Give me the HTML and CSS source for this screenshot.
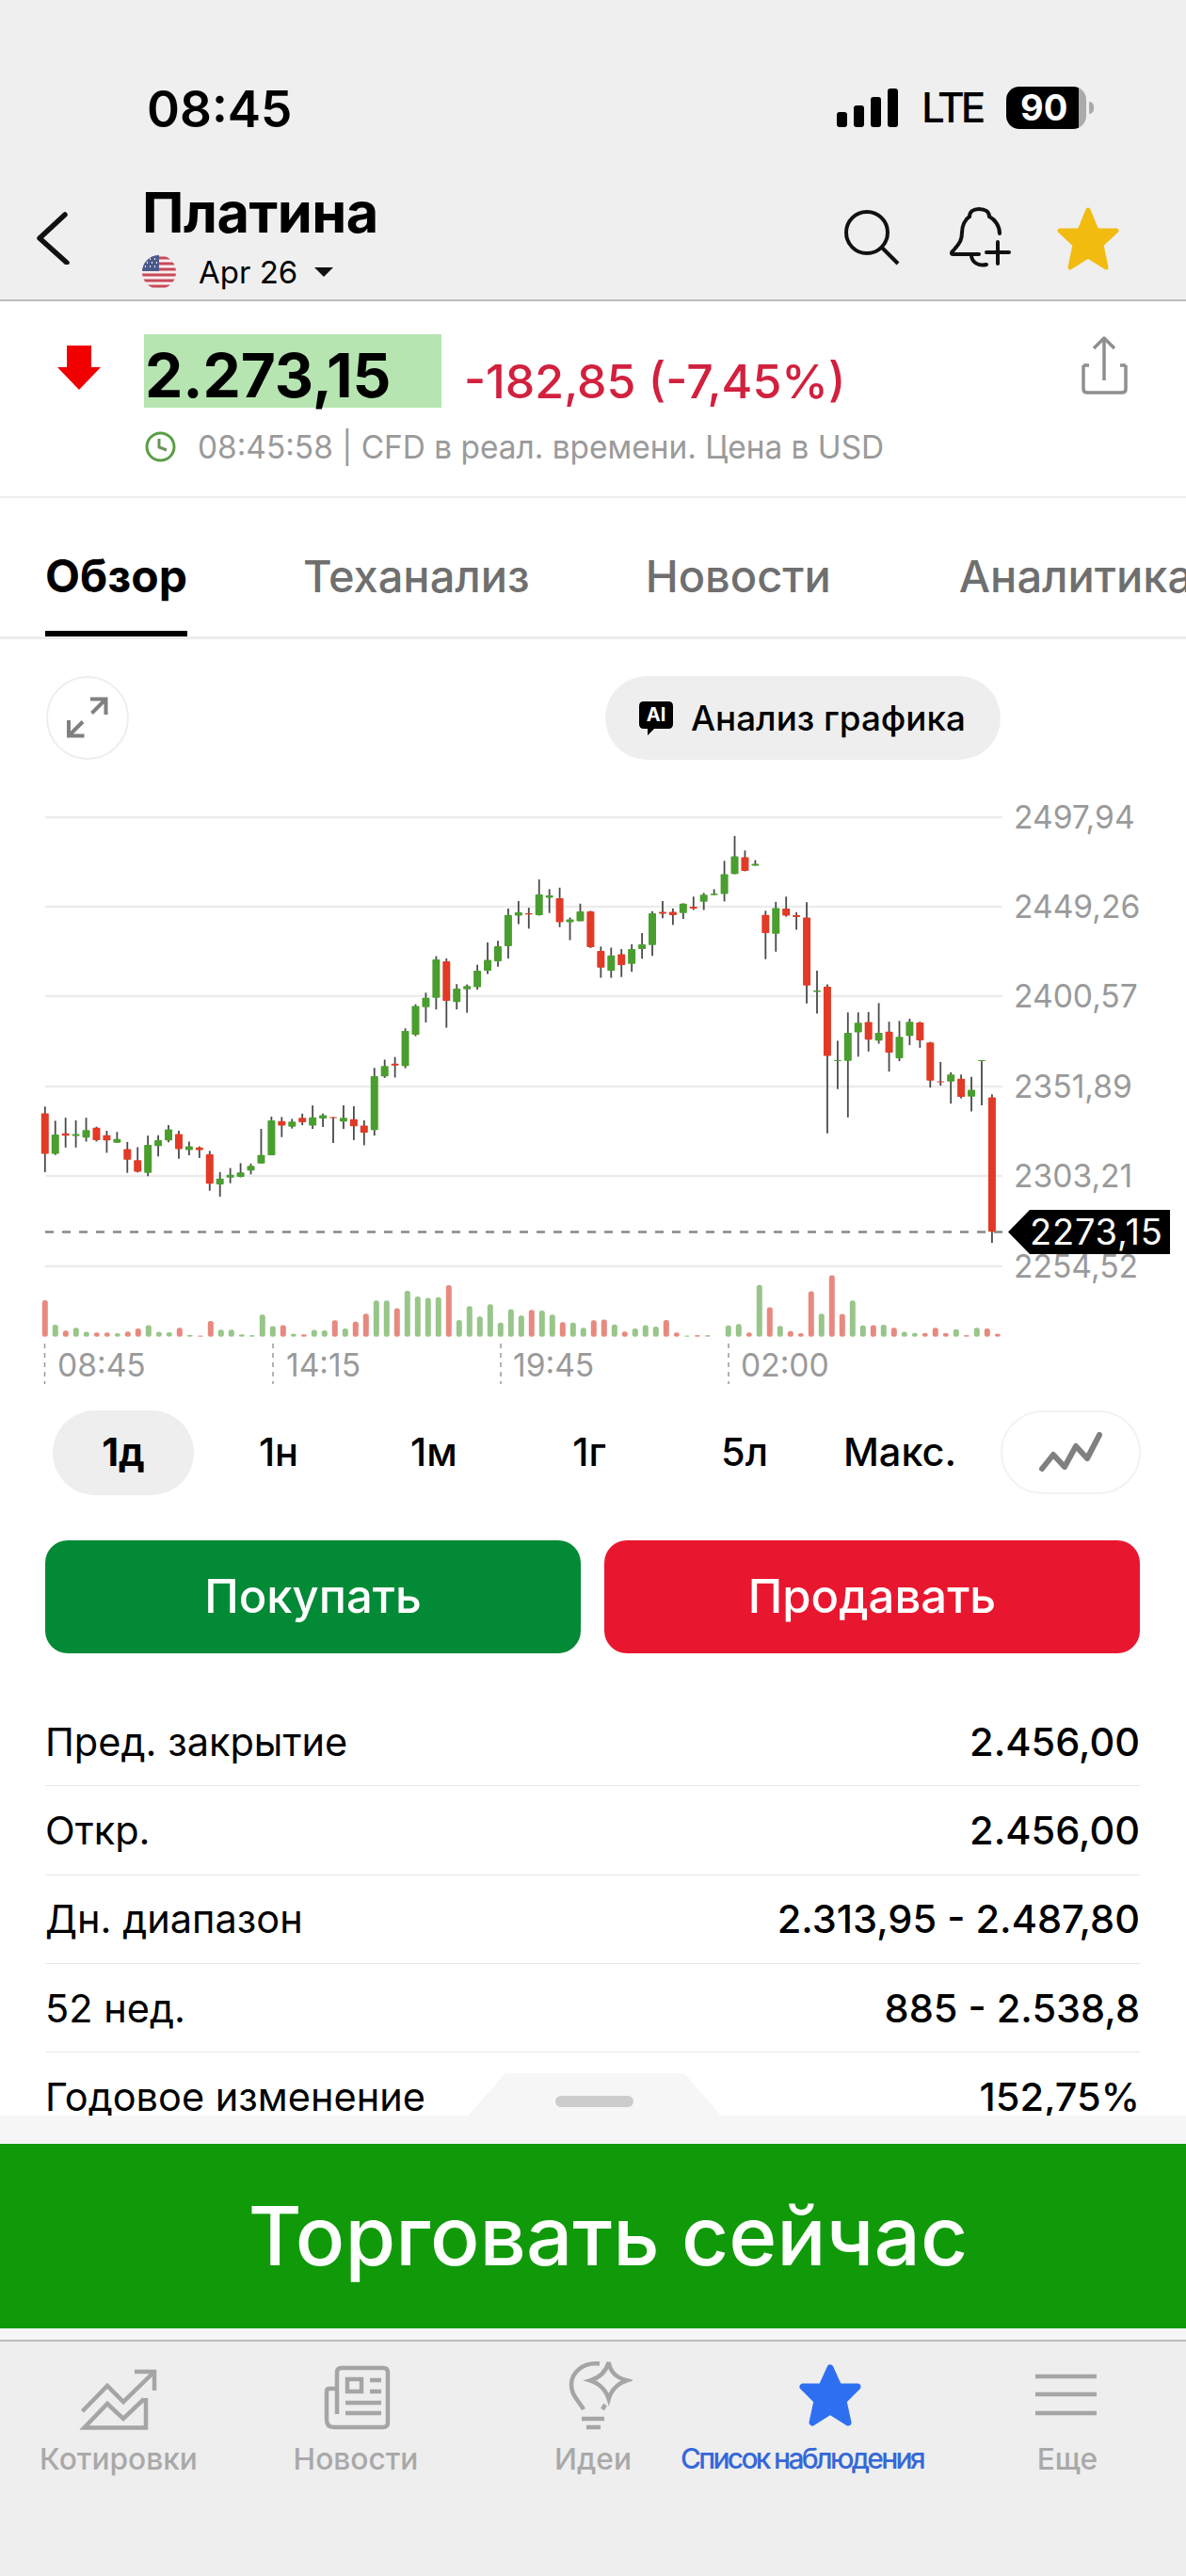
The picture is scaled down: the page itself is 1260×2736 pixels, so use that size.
FILE: index.html
```html
<html lang="ru">

<head>
    <meta charset="utf-8" />
    <title>Платина</title>
    <link rel="stylesheet" href="styles.css">
</head>

<body>
    <div class="content">
        <header class="top">
            <div class="status">
                <div class="status-time">08:45</div>
                <div class="signal"><i class="s1"></i><i class="s2"></i><i class="s3"></i><i class="s4"></i></div>
                <div class="lte">LTE</div>
                <div class="battery">90</div>
                <div class="battery-nub"></div>
            </div>
            <div class="nav">
                <svg class="back" viewBox="0 0 36 56">
                    <path d="M30 3 L3 28 L32 54" />
                </svg>
                <div class="nav-title">
                    <div class="title">Платина</div>
                    <div class="contract">
                        <svg class="flag" viewBox="0 0 36 36">
                            <defs>
                                <clipPath id="flag-clip"><circle cx="18" cy="18" r="18" /></clipPath>
                            </defs>
                            <g clip-path="url(#flag-clip)">
                                <rect width="36" height="36" fill="#f7eeee" />
                                <path d="M0 3H36M0 9H36M0 15H36M0 21H36M0 27H36M0 33H36" stroke="#c9495a" stroke-width="2.8" />
                                <rect width="18" height="17" fill="#4b5a8c" />
                                <path d="M3 4h1M8 4h1M13 4h1M5 8h1M10 8h1M15 8h1M3 12h1M8 12h1M13 12h1" stroke="#eee" stroke-width="2" />
                            </g>
                        </svg>
                        <span class="contract-name">Apr 26</span>
                        <span class="caret"></span>
                    </div>
                </div>
                <svg class="icon-search" viewBox="0 0 60 60">
                    <circle cx="24" cy="25" r="22" />
                    <path d="M40 41 L57 58" />
                </svg>
                <svg class="icon-bell" viewBox="0 0 66 66">
                    <path d="M53 28 C53 20 48 13 42 10 C42 5 38 2 31 2 C25 2 21 5 21 10 C16 13 13 20 13 27 C13 37 8 41 3 47 C1 49 2 50 4 50 L31 50" />
                    <path d="M23 52 C24 59 31 63 39 61" />
                    <path d="M39 48 H63 M51 37 V60" />
                </svg>
                <svg class="icon-star" viewBox="0 0 66 67">
                    <polygon points="33,3 42,25 63,25 47,40 52,64 33,52 14,64 19,40 3,25 24,25" />
                </svg>
            </div>
        </header>

        <section class="quote">
            <div class="quote-main">
                <svg class="down-arrow" viewBox="0 0 46 47">
                    <polygon points="10,0 36,0 36,23 46,23 23,47 0,23 10,23" />
                </svg>
                <div class="price">2.273,15</div>
                <div class="change">-182,85 (-7,45%)</div>
                <svg class="share" viewBox="0 0 49 64">
                    <path d="M24 3 V48 M13 14 L24 3 L35 14" />
                    <path d="M2 32 H8 M41 32 H47 M2 32 V57 Q2 61 6 61 H43 Q47 61 47 57 V32" />
                </svg>
            </div>
            <div class="quote-sub">
                <svg class="clock" viewBox="0 0 33 33">
                    <circle cx="16.5" cy="16.5" r="14.5" />
                    <path d="M15 8 V17 L23 20" />
                </svg>
                <span>08:45:58 | CFD в реал. времени. Цена в USD</span>
            </div>
        </section>

        <nav class="tabs">
            <div class="tab tab-active">Обзор</div>
            <div class="tab">Теханализ</div>
            <div class="tab">Новости</div>
            <div class="tab tab-last">Аналитика</div>
        </nav>

        <div class="chart-tools">
            <div class="round-btn">
                <svg viewBox="0 0 88 88">
                    <path d="M47 24.5 H63.5 V41 M63.5 24.5 L48.5 39.5" />
                    <path d="M24 47 V63.5 H40.5 M24 63.5 L39 48.5" />
                </svg>
            </div>
            <div class="ai-btn">
                <svg class="ai-icon" viewBox="0 0 36 36">
                    <path d="M5 0 H31 Q36 0 36 5 V24 Q36 29 31 29 H16 L9 36 V29 H5 Q0 29 0 24 V5 Q0 0 5 0 Z" />
                    <text x="18" y="21" text-anchor="middle">AI</text>
                </svg>
                <span>Анализ графика</span>
            </div>
        </div>

        <!-- chart coordinates are page coordinates, candles and volume come from chart.js -->
        <svg class="chart" id="chart" viewBox="0 840 1260 640">
            <g class="grid">
                <line x1="48" x2="1065" y1="868" y2="868" />
                <line x1="48" x2="1065" y1="963" y2="963" />
                <line x1="48" x2="1065" y1="1058" y2="1058" />
                <line x1="48" x2="1065" y1="1154" y2="1154" />
                <line x1="48" x2="1065" y1="1249" y2="1249" />
                <line x1="48" x2="1065" y1="1345" y2="1345" />
            </g>
            <line class="last-line" x1="48" x2="1075" y1="1308.6" y2="1308.6" />
            <g class="time-lines">
                <line x1="47.5" x2="47.5" y1="1427" y2="1470" />
                <line x1="290" x2="290" y1="1427" y2="1470" />
                <line x1="532" x2="532" y1="1427" y2="1470" />
                <line x1="774" x2="774" y1="1427" y2="1470" />
            </g>
            <g id="volume"></g>
            <g id="candles"></g>
            <g class="axis-text">
                <text x="1077" y="880">2497,94</text>
                <text x="1077" y="975">2449,26</text>
                <text x="1077" y="1070">2400,57</text>
                <text x="1077" y="1166">2351,89</text>
                <text x="1077" y="1261">2303,21</text>
                <text x="1077" y="1357">2254,52</text>
                <text x="61" y="1462">08:45</text>
                <text x="304" y="1462">14:15</text>
                <text x="545" y="1462">19:45</text>
                <text x="787" y="1462">02:00</text>
            </g>
            <polygon class="last-tag" points="1071,1308.6 1094,1285 1243,1285 1243,1332 1094,1332" />
            <text class="last-text" x="1094" y="1322">2273,15</text>
        </svg>

        <div class="ranges">
            <div class="range range-active">1д</div>
            <div class="range">1н</div>
            <div class="range">1м</div>
            <div class="range">1г</div>
            <div class="range">5л</div>
            <div class="range">Макс.</div>
            <div class="round-btn line-btn">
                <svg viewBox="0 0 149 89">
                    <path d="M44 62 L56 47 L68 60 L80 38 L92 51 L105 26" />
                </svg>
            </div>
        </div>

        <div class="trade">
            <div class="trade-btn buy">Покупать</div>
            <div class="trade-btn sell">Продавать</div>
        </div>

        <div class="stats">
            <div class="stat"><span>Пред. закрытие</span><b>2.456,00</b></div>
            <div class="stat"><span>Откр.</span><b>2.456,00</b></div>
            <div class="stat"><span>Дн. диапазон</span><b>2.313,95 - 2.487,80</b></div>
            <div class="stat"><span>52 нед.</span><b>885 - 2.538,8</b></div>
            <div class="stat"><span>Годовое изменение</span><b>152,75%</b></div>
        </div>
    </div>

    <div class="sheet">
        <div class="sheet-handle"><div class="sheet-grip"></div></div>
        <div class="banner">Торговать сейчас</div>
    </div>

    <footer class="tabbar">
        <div class="bar-item">
            <svg class="bar-icon" viewBox="-1 -7 84 76">
                <path d="M2.5 48 L29 21 L46 38 L79 6 M58 6 H79 V26" />
                <path d="M68 35 L46 56 L29 40 L4.5 65.5 H70 V34" />
            </svg>
            <span>Котировки</span>
        </div>
        <div class="bar-item">
            <svg class="bar-icon" viewBox="-8 -5 84 76">
                <path d="M14 53 V9 Q14 4 19 4 H63 Q68 4 68 9 V62 Q68 67 63 67 H11 Q3 67 3 59 V29 Q3 26 6 26 H14" />
                <rect x="25" y="16" width="15" height="13" />
                <path d="M49 17 H61 M49 29 H61 M23 41 H61 M23 52 H61" />
            </svg>
            <span>Новости</span>
        </div>
        <div class="bar-item">
            <svg class="bar-icon" viewBox="-17 0 84 76">
                <path d="M32 4.5 C14 3 2 14 2 27 C2 38 10 44 15 53" />
                <path d="M38 48 L35 53" />
                <path d="M13 63 H37 M18 72 H33" />
                <path d="M41.7 3 Q44 18 61 22.3 Q46 27 41.7 42 Q37 27 22 22.3 Q37 18 41.7 3 Z" />
            </svg>
            <span>Идеи</span>
        </div>
        <div class="bar-item bar-item-active">
            <svg class="bar-icon" viewBox="-9 -5 84 76">
                <polygon points="33,4 42,24 62,24 47,39 52,62 33,50 14,62 19,39 4,24 24,24" />
            </svg>
            <span>Список наблюдения</span>
        </div>
        <div class="bar-item">
            <svg class="bar-icon" viewBox="0 0 84 76">
                <path d="M8 18 H73 M8 37 H73 M8 57 H73" />
            </svg>
            <span>Еще</span>
        </div>
    </footer>

    <script src="chart.js"></script>
</body>

</html>
```

FILE: styles.css
```css
* {
    box-sizing: border-box;
}

body {
    margin: 0;
    width: 1260px;
    height: 2736px;
    overflow: hidden;
    background-color: #fff;
    color: #000;
    font-family: Inter, "Liberation Sans", sans-serif;
    display: flex;
    flex-direction: column;
}

.content {
    height: 2247px;
    overflow: hidden;
    flex: none;
}

/* header */
.top {
    height: 320px;
    background-color: #efefef;
    border-bottom: 2px solid #bcbcbc;
}

.status {
    height: 190px;
    padding-top: 92px;
    display: flex;
    align-items: flex-start;
}

.status-time {
    margin-left: 156px;
    font-size: 53px;
    line-height: 48px;
    font-weight: 600;
    width: 733px;
}

.signal {
    display: flex;
    align-items: flex-end;
    gap: 7.5px;
    height: 43px;
    width: 65px;
}

.signal i {
    display: block;
    width: 10.5px;
    border-radius: 3px;
    background-color: #000;
}

.s1 { height: 16px; }
.s2 { height: 23px; }
.s3 { height: 32px; }
.s4 { height: 41px; }

.lte {
    margin-left: 25px;
    width: 90px;
    font-size: 44px;
    line-height: 44px;
    font-weight: 500;
    letter-spacing: -3.8px;
}

.battery {
    width: 85px;
    height: 45px;
    border-radius: 14px;
    background: linear-gradient(to right, #000 77px, #aaa 77px);
    color: #fff;
    font-size: 38px;
    line-height: 45px;
    font-weight: 700;
    padding-left: 15px;
}

.battery-nub {
    margin: 16px 0 0 3px;
    width: 5px;
    height: 13px;
    border-radius: 0 6px 6px 0;
    background-color: #aaa;
}

.nav {
    height: 128px;
    display: flex;
    align-items: flex-start;
}

.back {
    width: 36px;
    height: 56px;
    margin: 35px 0 0 39px;
    fill: none;
    stroke: #111;
    stroke-width: 5.5px;
    stroke-linecap: round;
    stroke-linejoin: round;
}

.nav-title {
    margin-left: 76px;
    width: 746px;
}

.title {
    font-size: 59.5px;
    line-height: 70px;
    font-weight: 700;
    letter-spacing: -0.5px;
}

.contract {
    margin-top: 11px;
    display: flex;
    align-items: center;
    height: 36px;
}

.flag {
    width: 36px;
    height: 36px;
}

.contract-name {
    margin-left: 24px;
    font-size: 33px;
}

.caret {
    margin-left: 18px;
    border-left: 10px solid transparent;
    border-right: 10px solid transparent;
    border-top: 10px solid #111;
}

.icon-search {
    width: 60px;
    height: 60px;
    margin-top: 32px;
    fill: none;
    stroke: #111;
    stroke-width: 4px;
}

.icon-bell {
    width: 66px;
    height: 66px;
    margin: 30px 0 0 52px;
    fill: none;
    stroke: #111;
    stroke-width: 4px;
    stroke-linecap: round;
}

.icon-star {
    width: 66px;
    height: 67px;
    margin: 30px 0 0 48px;
    fill: #f2bb10;
    stroke: #f2bb10;
    stroke-width: 5px;
    stroke-linejoin: round;
}

/* quote */
.quote {
    height: 209px;
    border-bottom: 2px solid #eeeeee;
    padding-top: 35px;
}

.quote-main {
    display: flex;
    align-items: flex-start;
}

.down-arrow {
    width: 46px;
    height: 47px;
    margin: 12px 0 0 61px;
    fill: #f00000;
}

.price {
    margin-left: 46px;
    width: 316px;
    height: 78px;
    padding-left: 1px;
    background-color: #b6e5b1;
    font-size: 64px;
    line-height: 88px;
    font-weight: 700;
    letter-spacing: -0.1px;
}

.change {
    margin: 20px 0 0 24px;
    width: 656px;
    font-size: 50px;
    line-height: 60px;
    font-weight: 500;
    color: #d2203f;
    letter-spacing: 0;
}

.share {
    width: 49px;
    height: 64px;
    margin-top: 1px;
    fill: none;
    stroke: #8f8f8f;
    stroke-width: 3.5px;
    stroke-linejoin: round;
}

.quote-sub {
    margin-top: 23px;
    padding-left: 154px;
    display: flex;
    align-items: center;
    height: 33px;
    font-size: 33.4px;
    color: #9a9a9a;
}

.clock {
    width: 33px;
    height: 33px;
    margin-right: 23px;
    fill: none;
    stroke: #5a9e46;
    stroke-width: 3px;
}

.clock path {
    stroke: #6b8f60;
}

/* tabs */
.tabs {
    height: 150px;
    border-bottom: 3px solid #ececec;
    padding-left: 48px;
    display: flex;
    gap: 123px;
    overflow: hidden;
}

.tab {
    padding-top: 55px;
    height: 147px;
    font-size: 47px;
    line-height: 56px;
    font-weight: 500;
    color: #6f6f6f;
    white-space: nowrap;
    flex: none;
}

.tab-active {
    color: #000;
    font-size: 48px;
    font-weight: 700;
    border-bottom: 6px solid #000;
}

.tab-last {
    margin-left: 13px;
}

/* chart */
.chart-tools {
    height: 161px;
    padding: 39px 197px 0 49px;
    display: flex;
    justify-content: space-between;
    align-items: flex-start;
}

.round-btn {
    width: 88px;
    height: 89px;
    border: 2px solid #eeeeee;
    border-radius: 45px;
    position: relative;
}

.round-btn svg {
    position: absolute;
    left: -2px;
    top: -2px;
    width: 88px;
    height: 88px;
    fill: none;
    stroke: #808080;
    stroke-width: 4px;
}

.ai-btn {
    width: 420px;
    height: 89px;
    border-radius: 45px;
    background-color: #eeeeee;
    display: flex;
    align-items: center;
    padding-left: 36px;
    font-size: 36.8px;
    font-weight: 500;
}

.ai-icon {
    width: 36px;
    height: 36px;
    margin-right: 19px;
}

.ai-icon text {
    fill: #fff;
    font-size: 20px;
    font-weight: 700;
}

.chart {
    display: block;
    width: 1260px;
    height: 640px;
}

.grid line {
    stroke: #ececec;
    stroke-width: 2.5px;
}

.last-line {
    stroke: #888;
    stroke-width: 2.5px;
    stroke-dasharray: 9 9;
}

.time-lines line {
    stroke: #999;
    stroke-width: 1.5px;
    stroke-dasharray: 5 5;
}

.axis-text text {
    fill: #9a9a9a;
    font-size: 33.6px;
}

.last-tag {
    fill: #000;
}

.last-text {
    fill: #fff;
    font-size: 38px;
    letter-spacing: 0.8px;
}

.wick {
    stroke: #4a4a4a;
    stroke-width: 1.8px;
}

.candle-g { fill: #4a9e2f; }
.candle-r { fill: #e23a26; }
.vol-g { fill: #98c68a; }
.vol-r { fill: #e8897f; }

.ranges {
    height: 108px;
    padding: 18px 48px 0 56px;
    display: flex;
    gap: 15px;
    align-items: flex-start;
}

.range {
    width: 150px;
    height: 90px;
    border-radius: 45px;
    text-align: center;
    font-size: 41.5px;
    line-height: 88px;
    font-weight: 500;
    flex: none;
}

.range-active {
    background-color: #eeeeee;
    font-weight: 700;
}

.line-btn {
    margin-left: auto;
    width: 149px;
    flex: none;
    border-color: #f3f3f3;
}

.line-btn svg {
    width: 149px;
    height: 89px;
    stroke-width: 6px;
    stroke-linecap: round;
    stroke-linejoin: round;
}

/* buy and sell */
.trade {
    margin-top: 48px;
    padding: 0 49px 0 48px;
    display: flex;
    gap: 25px;
}

.trade-btn {
    flex: 1;
    height: 120px;
    border-radius: 24px;
    color: #fff;
    text-align: center;
    font-size: 49px;
    line-height: 120px;
    font-weight: 500;
}

.buy { background-color: #038a37; }
.sell { background-color: #e8172f; }

/* stats */
.stats {
    margin-top: 47px;
    padding: 0 49px 0 48px;
}

.stat {
    height: 94.3px;
    display: flex;
    justify-content: space-between;
    align-items: center;
    border-bottom: 1.5px solid #e8e8e8;
    font-size: 41.5px;
}

.stat b {
    font-weight: 500;
}

/* bottom sheet */
.sheet {
    position: relative;
    height: 238px;
    flex: none;
    background-color: #f6f6f6;
    padding-top: 30px;
}

.sheet-handle {
    position: absolute;
    left: 497px;
    bottom: 100%;
    width: 269px;
    height: 45px;
    background-color: #f6f6f6;
    clip-path: polygon(40px 0, 230px 0, 269px 45px, 0 45px);
    display: flex;
    justify-content: center;
}

.sheet-grip {
    width: 83px;
    height: 12px;
    margin-top: 24px;
    border-radius: 6px;
    background-color: #cccccc;
}

.banner {
    height: 196px;
    background-color: #109a0a;
    color: #fff;
    text-align: center;
    padding-left: 32px;
    font-size: 87px;
    line-height: 196px;
    font-weight: 500;
}

/* tab bar */
.tabbar {
    flex: 1;
    border-top: 2px solid #bcbcbc;
    background-color: #eeeeee;
    padding-top: 19px;
    display: grid;
    grid-template-columns: repeat(5, 252px);
}

.bar-item {
    display: flex;
    flex-direction: column;
    align-items: center;
    font-size: 31.7px;
    font-weight: 500;
    color: #a9a9a9;
}

.bar-item span {
    margin-top: 10px;
    white-space: nowrap;
}

.bar-icon {
    width: 84px;
    height: 76px;
    fill: none;
    stroke: #a5a5a5;
    stroke-width: 4.5px;
}

.bar-item-active {
    color: #3568d8;
}

.bar-item-active span {
    margin-right: 60px;
    font-size: 30px;
    line-height: 38px;
    letter-spacing: -2.7px;
}

.bar-item-active .bar-icon {
    fill: #2e6ff2;
    stroke: #2e6ff2;
    stroke-width: 7px;
    stroke-linejoin: round;
}
```

FILE: chart.js
```js
// Vertical values are measured in chart units, 2.529 units = 1px from the top of the chart
const UNIT = 2.529;
const TOP = 840;
const SVG_NS = 'http://www.w3.org/2000/svg';

// wick top, wick bottom, body top, body bottom, colour
const candles = [
    [848, 1024, 866, 975, 'r'], [886, 978, 923, 975, 'g'], [878, 958, 920, 926, 'r'], [885, 958, 922, 927, 'g'],
    [878, 942, 911, 931, 'g'], [902, 942, 905, 938, 'r'], [913, 972, 925, 939, 'r'], [916, 945, 935, 945, 'g'],
    [943, 1026, 962, 991, 'r'], [957, 1025, 992, 1023, 'r'], [926, 1035, 951, 1026, 'g'], [925, 982, 938, 954, 'g'],
    [898, 944, 909, 939, 'g'], [913, 988, 922, 962, 'r'], [942, 979, 955, 965, 'g'], [955, 986, 958, 965, 'r'],
    [967, 1074, 976, 1055, 'r'], [1024, 1090, 1041, 1057, 'g'], [1013, 1054, 1031, 1039, 'g'], [1000, 1038, 1025, 1037, 'g'],
    [1001, 1030, 1007, 1020, 'g'], [908, 1001, 978, 1001, 'g'], [875, 979, 885, 979, 'g'], [876, 930, 887, 899, 'r'],
    [881, 907, 888, 902, 'g'], [867, 898, 878, 890, 'r'], [845, 908, 877, 899, 'g'], [867, 903, 871, 880, 'g'],
    [876, 946, 876, 879, 'r'], [845, 908, 878, 888, 'g'], [847, 938, 882, 901, 'r'], [885, 952, 899, 918, 'r'],
    [744, 926, 766, 911, 'g'], [722, 771, 739, 767, 'g'], [715, 770, 733, 738, 'r'], [638, 745, 645, 739, 'g'],
    [573, 659, 578, 655, 'g'], [542, 622, 556, 581, 'g'], [444, 587, 453, 556, 'g'], [450, 636, 458, 564, 'r'],
    [519, 587, 531, 567, 'g'], [520, 596, 524, 533, 'g'], [467, 534, 483, 527, 'g'], [407, 492, 454, 483, 'g'],
    [403, 472, 417, 458, 'g'], [316, 450, 333, 417, 'g'], [296, 358, 326, 335, 'g'], [314, 370, 329, 332, 'r'],
    [238, 335, 278, 334, 'g'], [264, 328, 281, 287, 'g'], [260, 366, 288, 353, 'r'], [340, 401, 345, 353, 'g'],
    [303, 350, 324, 350, 'g'], [322, 422, 324, 420, 'r'], [418, 502, 430, 475, 'r'], [421, 502, 442, 483, 'g'],
    [425, 500, 439, 468, 'r'], [412, 486, 425, 465, 'g'], [382, 451, 412, 425, 'g'], [323, 443, 329, 414, 'g'],
    [296, 342, 325, 330, 'r'], [316, 360, 325, 334, 'r'], [302, 344, 303, 328, 'g'], [284, 320, 311, 316, 'r'],
    [274, 320, 279, 298, 'g'], [264, 280, 276, 280, 'g'], [188, 297, 224, 277, 'g'], [121, 224, 176, 223, 'g'],
    [160, 216, 178, 215, 'r'], [186, 201, 196, 201, 'g'], [322, 452, 333, 382, 'r'], [298, 432, 315, 384, 'g'],
    [284, 338, 316, 335, 'r'], [326, 373, 334, 339, 'r'], [299, 571, 340, 523, 'r'], [483, 598, 536, 540, 'g'],
    [520, 920, 526, 712, 'r'], [671, 801, 723, 725, 'g'], [595, 877, 650, 725, 'g'], [595, 714, 623, 649, 'g'],
    [594, 700, 621, 668, 'r'], [570, 679, 650, 671, 'g'], [620, 754, 647, 703, 'r'], [618, 726, 661, 718, 'g'],
    [612, 683, 620, 658, 'g'], [620, 690, 622, 670, 'r'], [674, 797, 676, 778, 'r'], [728, 792, 780, 782, 'r'],
    [756, 840, 762, 781, 'g'], [762, 826, 773, 822, 'r'], [768, 861, 803, 821, 'g'], [723, 845, 723, 724, 'g'],
    [815, 1214, 823, 1184, 'r']
];

// Bar heights, negative is a red bar
const volume = [
    -98, 32, -16, 24, 13, -11, -11, 9, -14, -22, 31, 13, 12, -24, 5, -3, -42, 19, 19, 6, 4, 59, 28, -31, 8, -6,
    18, 17, -44, 22, -40, -62, 97, 97, -76, 123, 108, 104, 106, -138, 45, 82, 54, 87, 38, 74, 57, -72, 70, 59,
    -39, 38, 24, -44, -46, 33, -14, 22, 31, 27, -45, -11, 3, -4, 4, 0, 30, 34, -11, 139, -79, 29, -15, -9,
    -122, 62, -165, -61, 97, 30, -31, 32, -24, 13, 10, -10, -24, -10, 20, -4, 24, -22, -8
];

function toY(value) {
    return TOP + value / UNIT;
}

function addShape(parent, name, attrs) {
    const node = document.createElementNS(SVG_NS, name);
    Object.entries(attrs).forEach(([key, val]) => node.setAttribute(key, val));
    parent.appendChild(node);
}

const candleGroup = document.getElementById('candles');
candles.forEach(([wickTop, wickBottom, bodyTop, bodyBottom, colour], i) => {
    const x = 47.8 + i * 10.936;
    addShape(candleGroup, 'line', { class: 'wick', x1: x, x2: x, y1: toY(wickTop), y2: toY(wickBottom) });
    addShape(candleGroup, 'rect', {
        class: 'candle-' + colour,
        x: x - 4,
        y: toY(bodyTop),
        width: 8,
        height: Math.max((bodyBottom - bodyTop) / UNIT, 1),
        rx: 0.8
    });
});

const volumeGroup = document.getElementById('volume');
volume.forEach((bar, i) => {
    if (bar === 0) return;
    const height = Math.abs(bar) / UNIT;
    addShape(volumeGroup, 'rect', {
        class: bar < 0 ? 'vol-r' : 'vol-g',
        x: 44.8 + i * 11,
        y: toY(1466) - height,
        width: 6,
        height,
        rx: 2.5
    });
});
```
